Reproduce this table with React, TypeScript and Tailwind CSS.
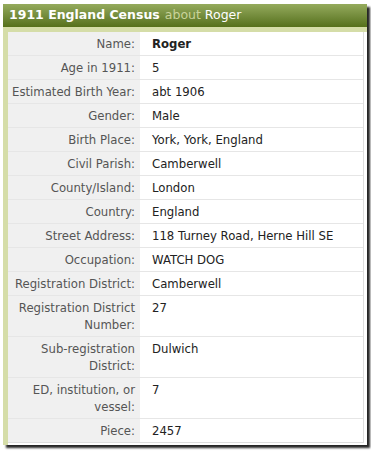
import React from 'react';

const rows: { label: string; value: string; bold?: boolean }[] = [
  { label: 'Name:', value: 'Roger', bold: true },
  { label: 'Age in 1911:', value: '5' },
  { label: 'Estimated Birth Year:', value: 'abt 1906' },
  { label: 'Gender:', value: 'Male' },
  { label: 'Birth Place:', value: 'York, York, England' },
  { label: 'Civil Parish:', value: 'Camberwell' },
  { label: 'County/Island:', value: 'London' },
  { label: 'Country:', value: 'England' },
  { label: 'Street Address:', value: '118 Turney Road, Herne Hill SE' },
  { label: 'Occupation:', value: 'WATCH DOG' },
  { label: 'Registration District:', value: 'Camberwell' },
  { label: 'Registration District Number:', value: '27' },
  { label: 'Sub-registration District:', value: 'Dulwich' },
  { label: 'ED, institution, or vessel:', value: '7' },
  { label: 'Piece:', value: '2457' },
];

const App: React.FC = () => {
  return (
    <div className="min-h-[451px] w-[371px] bg-white pl-[3px] pt-[4px] font-['DejaVu_Sans',Verdana,sans-serif]">
      <div className="w-[364px] bg-white shadow-[3px_3px_2px_rgba(0,0,0,0.85)]">
        <div className="flex h-[23px] items-center bg-gradient-to-b from-[#95ab5d] to-[#56701a] px-[6px] text-[12.5px] leading-none">
          <span className="font-bold text-white">1911 England Census</span>
          <span className="ml-[5px] text-[#c9d39a]">about</span>
          <span className="ml-[4px] text-white">Roger</span>
        </div>
        <div className="bg-[#d5dda8] pl-[5px] pt-[5px]">
          <div className="bg-white pb-[2px] pr-[3px]">
            <div className="border-r border-b border-[#dedede]">
              {rows.map((row) => (
                <div key={row.label} className="flex border-b border-[#e6e6e6] last:border-b-0 text-[11.7px] leading-[17px]">
                  <div className="w-[132px] shrink-0 bg-[#f0f0f0] pt-[4px] pb-[2px] pl-[4px] pr-[5px] text-right text-[#555555]">
                    {row.label}
                  </div>
                  <div className={`flex-1 pt-[4px] pb-[2px] pl-[12px] text-[#222222] ${row.bold ? 'font-bold' : ''}`}>
                    {row.value}
                  </div>
                </div>
              ))}
            </div>
          </div>
        </div>
      </div>
    </div>
  );
};

export default App;
